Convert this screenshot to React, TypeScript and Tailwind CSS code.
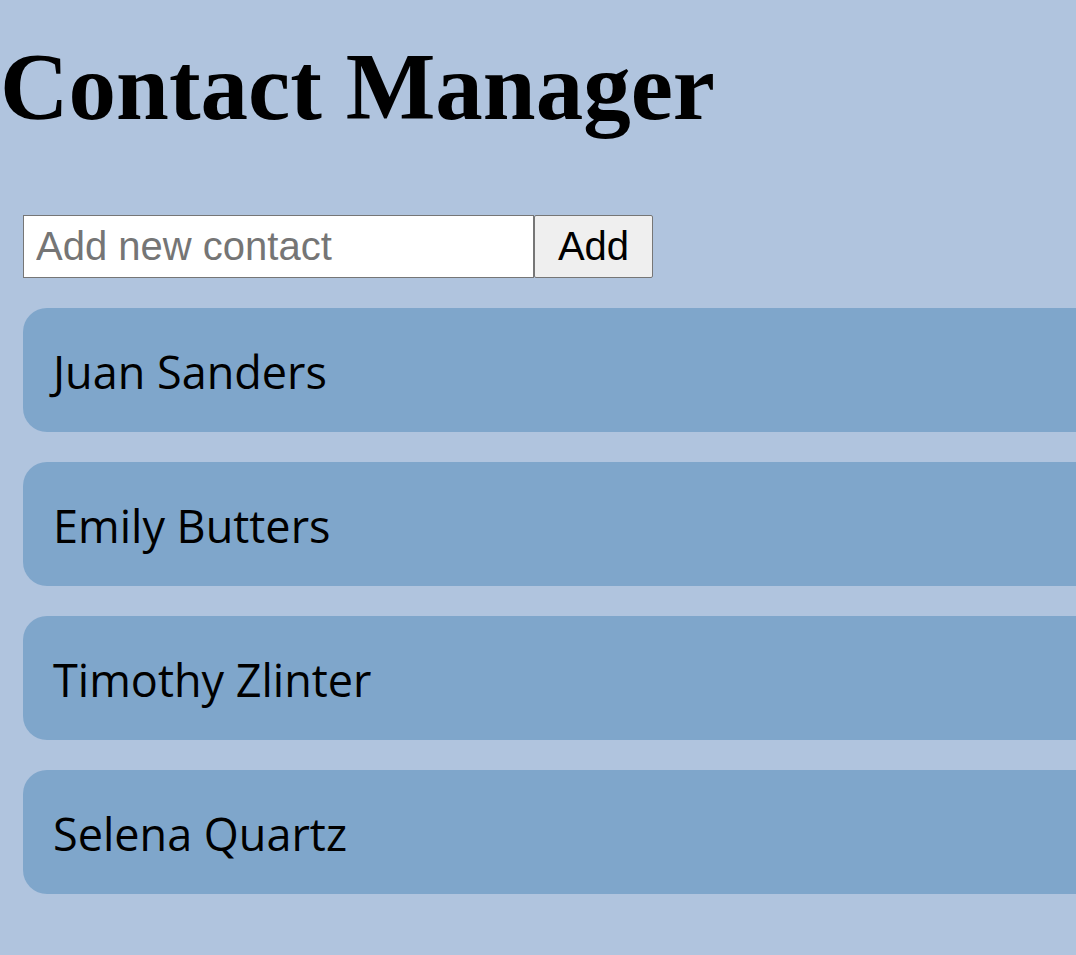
import React, { useState } from "react";

const initialContacts = ["Juan Sanders", "Emily Butters", "Timothy Zlinter", "Selena Quartz"];

const App = () => {
  const [contacts, setContacts] = useState<string[]>(initialContacts);
  const [name, setName] = useState("");

  const handleAdd = () => {
    if (!name.trim()) return;
    setContacts([...contacts, name.trim()]);
    setName("");
  };

  return (
    <div className="min-h-screen w-full overflow-hidden bg-[#b0c4de]">
      <h1 className="pt-[35px] text-[95px] leading-[1.1] font-bold text-black whitespace-nowrap font-['Liberation_Serif','Times_New_Roman',serif]">
        Contact Manager
      </h1>
      <div className="mt-[75px] ml-[23px] flex font-['Liberation_Sans',Arial,sans-serif]">
        <input
          type="text"
          placeholder="Add new contact"
          value={name}
          onChange={(e) => setName(e.target.value)}
          className="w-[511px] h-[63px] px-[12px] bg-white border border-[#767676] text-[40px] text-black placeholder-[#757575] outline-none"
        />
        <button
          onClick={handleAdd}
          className="w-[119px] h-[63px] bg-[#efefef] border border-[#767676] rounded-[2px] text-[40px] text-black"
        >
          Add
        </button>
      </div>
      <ul className="mt-[30px] ml-[23px] flex flex-col gap-[30px] w-[1100px] font-['Open_Sans','Noto_Sans',sans-serif]">
        {contacts.map((c) => (
          <li
            key={c}
            className="h-[124px] flex items-center pl-[30px] pt-[4px] rounded-3xl bg-[#7fa6cb] text-[45px] text-black"
          >
            {c}
          </li>
        ))}
      </ul>
    </div>
  );
};

export default App;
